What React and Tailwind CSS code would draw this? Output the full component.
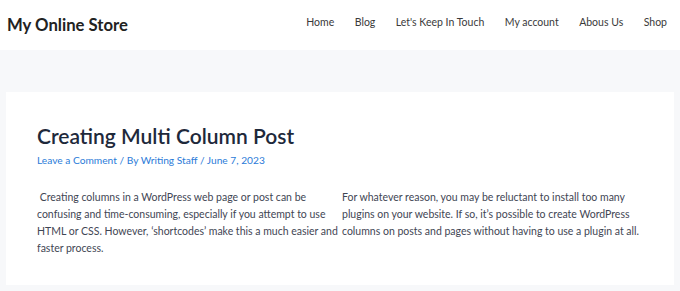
export default function App() {
  const nav = ["Home", "Blog", "Let's Keep In Touch", "My account", "Abous Us", "Shop"];
  return (
    <div className="min-h-screen bg-[#f7f8fa] font-['Lato',sans-serif]">
      {/* Header */}
      <header className="h-[50px] bg-white flex items-center justify-between pl-[7px] pr-[13px]">
        <div className="text-[16.7px] font-bold text-[#222] pt-[2px]">My Online Store</div>
        <nav className="flex items-center gap-[20.5px] text-[10.5px] text-[#3a3a3a] pb-[5px]">
          {nav.map((n) => (
            <a key={n} href="#" className="hover:text-[#0274be]">
              {n}
            </a>
          ))}
        </nav>
      </header>

      {/* Post */}
      <main className="pt-[42px] px-[6px] pb-[6px]">
        <article className="bg-white h-[193px] pl-[31px] pr-[30px] pt-[30px]">
          <h1 className="text-[21px] font-semibold text-[#1e293b] leading-[28px]">
            Creating Multi Column Post
          </h1>
          <div className="text-[10.2px] text-[#2b7bd8] leading-[16px] mt-[2px]">
            <a href="#">Leave a Comment</a> / By <a href="#">Writing Staff</a> / <a href="#">June 7, 2023</a>
          </div>
          <div className="grid grid-cols-[304px_1fr] gap-[1px] mt-[21px] text-[10.5px] leading-[17px] text-[#3f4654] w-[604px]">
            <p>
              &nbsp;Creating columns in a WordPress web page or post can be confusing and time-consuming, especially if you attempt to use HTML or CSS. However, ‘shortcodes’ make this a much easier and faster process.
            </p>
            <p>
              For whatever reason, you may be reluctant to install too many plugins on your website. If so, it’s possible to create WordPress columns on posts and pages without having to use a plugin at all.
            </p>
          </div>
        </article>
      </main>
    </div>
  );
}
